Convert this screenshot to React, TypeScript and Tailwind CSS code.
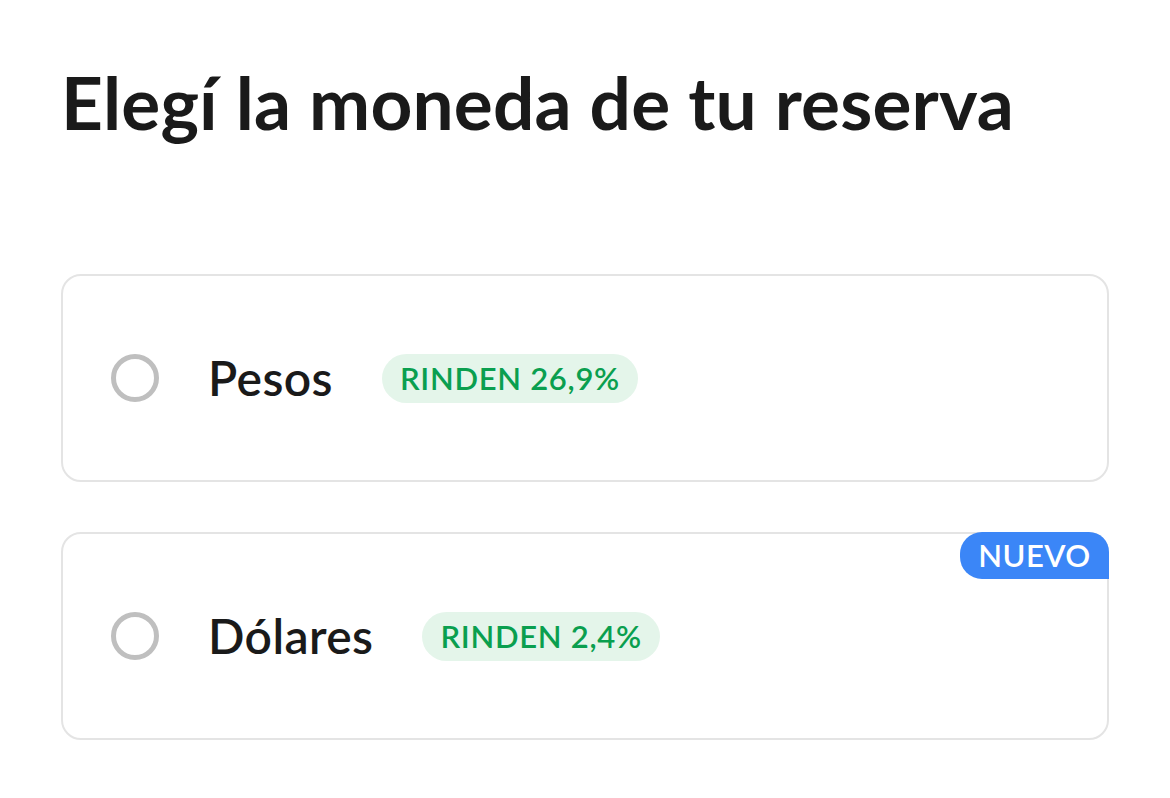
export default function App() {
  const options = [
    { label: 'Pesos', rate: 'RINDEN 26,9%', isNew: false },
    { label: 'Dólares', rate: 'RINDEN 2,4%', isNew: true },
  ]

  return (
    <div
      className="min-h-[798px] w-[1170px] bg-white px-[61px] pt-[58px] text-[#1a1a1a]"
      style={{ fontFamily: 'Lato, "Noto Sans", sans-serif' }}
    >
      <h1 className="text-[73px] font-bold leading-[88px] tracking-[0.15px]">Elegí la moneda de tu reserva</h1>

      <div className="mt-[128px] flex w-[1048px] flex-col gap-[50px]">
        {options.map((o) => (
          <div
            key={o.label}
            className="relative flex h-[208px] items-center rounded-[20px] border-2 border-[#e4e4e4] pl-[48px]"
          >
            {o.isNew && (
              <div className="absolute -right-[2px] -top-[2px] flex h-[47px] w-[149px] items-center justify-center rounded-tl-[22px] rounded-tr-[20px] rounded-bl-[22px] bg-[#3b86f7] text-[31px] font-semibold tracking-[0.5px] text-white">
                NUEVO
              </div>
            )}
            <div className="h-[48px] w-[48px] rounded-full border-[5px] border-[#bfbfbf]" />
            <div className="ml-[49px] text-[48px] font-semibold tracking-[0.4px]">{o.label}</div>
            <div className="ml-[49px] flex h-[49px] items-center rounded-full bg-[#e4f5ea] px-[18px] text-[31px] font-semibold tracking-[0.7px] text-[#0a9f4f]">
              {o.rate}
            </div>
          </div>
        ))}
      </div>
    </div>
  )
}
